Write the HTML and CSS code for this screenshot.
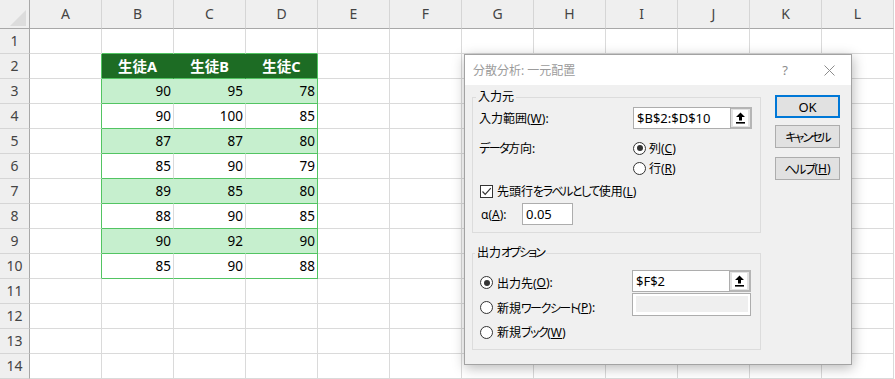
FILE: index.html
```html
<!DOCTYPE html>
<html lang="ja">
<head>
<meta charset="utf-8">
<title>分散分析: 一元配置</title>
<link rel="stylesheet" href="styles.css">
</head>
<body>
<div class="sheet">
  <div class="row hdr">
    <div class="corner"><svg width="16" height="16" viewBox="0 0 16 16"><polygon points="16,0 16,16 0,16" fill="#dcdcdc"/></svg></div>
    <div>A</div><div>B</div><div>C</div><div>D</div><div>E</div><div>F</div><div>G</div><div>H</div><div>I</div><div>J</div><div>K</div><div>L</div>
  </div>
  <div class="row"><div class="rh">1</div><div></div><div class="tb"></div><div class="tb"></div><div class="tb"></div><div></div><div></div><div></div><div></div><div></div><div></div><div></div><div></div></div>
  <div class="row"><div class="rh">2</div><div class="tl"></div><div class="h">生徒A</div><div class="h">生徒B</div><div class="h tr">生徒C</div><div></div><div></div><div></div><div></div><div></div><div></div><div></div><div></div></div>
  <div class="row"><div class="rh">3</div><div class="tl"></div><div class="n gf">90</div><div class="n gf">95</div><div class="n gf tr">78</div><div></div><div></div><div></div><div></div><div></div><div></div><div></div><div></div></div>
  <div class="row"><div class="rh">4</div><div class="tl"></div><div class="n">90</div><div class="n">100</div><div class="n tr">85</div><div></div><div></div><div></div><div></div><div></div><div></div><div></div><div></div></div>
  <div class="row"><div class="rh">5</div><div class="tl"></div><div class="n gf">87</div><div class="n gf">87</div><div class="n gf tr">80</div><div></div><div></div><div></div><div></div><div></div><div></div><div></div><div></div></div>
  <div class="row"><div class="rh">6</div><div class="tl"></div><div class="n">85</div><div class="n">90</div><div class="n tr">79</div><div></div><div></div><div></div><div></div><div></div><div></div><div></div><div></div></div>
  <div class="row"><div class="rh">7</div><div class="tl"></div><div class="n gf">89</div><div class="n gf">85</div><div class="n gf tr">80</div><div></div><div></div><div></div><div></div><div></div><div></div><div></div><div></div></div>
  <div class="row"><div class="rh">8</div><div class="tl"></div><div class="n">88</div><div class="n">90</div><div class="n tr">85</div><div></div><div></div><div></div><div></div><div></div><div></div><div></div><div></div></div>
  <div class="row"><div class="rh">9</div><div class="tl"></div><div class="n gf">90</div><div class="n gf">92</div><div class="n gf tr">90</div><div></div><div></div><div></div><div></div><div></div><div></div><div></div><div></div></div>
  <div class="row"><div class="rh">10</div><div class="tl"></div><div class="n">85</div><div class="n">90</div><div class="n tr">88</div><div></div><div></div><div></div><div></div><div></div><div></div><div></div><div></div></div>
  <div class="row"><div class="rh">11</div><div></div><div></div><div></div><div></div><div></div><div></div><div></div><div></div><div></div><div></div><div></div><div></div></div>
  <div class="row"><div class="rh">12</div><div></div><div></div><div></div><div></div><div></div><div></div><div></div><div></div><div></div><div></div><div></div><div></div></div>
  <div class="row"><div class="rh">13</div><div></div><div></div><div></div><div></div><div></div><div></div><div></div><div></div><div></div><div></div><div></div><div></div></div>
  <div class="row"><div class="rh">14</div><div></div><div></div><div></div><div></div><div></div><div></div><div></div><div></div><div></div><div></div><div></div><div></div></div>
</div>

<div class="dlg">
  <div class="dlg-title">
    <span class="dlg-name">分散分析: 一元配置</span>
    <span class="dlg-help">?</span>
    <svg class="dlg-close" width="11" height="11" viewBox="0 0 11 11"><path d="M0.5 0.5 L10.5 10.5 M10.5 0.5 L0.5 10.5" stroke="#8c8c8c" stroke-width="1" fill="none"/></svg>
  </div>
  <div class="dlg-body">
    <div class="dlg-main">
      <div class="grp g1">
        <div class="legend">入力元</div>
        <div class="line l-range">
          <span class="lbl">入力範囲(<u>W</u>):</span>
          <div class="ref"><span class="ref-text">$B$2:$D$10</span><span class="pick"><span><svg width="11" height="12" viewBox="0 0 11 12"><path d="M5.5 0.5 L10 5 H7 V8.5 H4 V5 H1 Z" fill="#000"/><rect x="1" y="10" width="9" height="1.6" fill="#000"/></svg></span></span></div>
        </div>
        <div class="line l-dir">
          <span class="lbl"><span class="k">データ</span>方向:</span>
          <span class="opt"><span class="rd on"></span>列(<u>C</u>)</span>
        </div>
        <div class="line l-row">
          <span class="lbl"></span>
          <span class="opt"><span class="rd"></span>行(<u>R</u>)</span>
        </div>
        <div class="line l-chk">
          <span class="chk"><svg width="11" height="11" viewBox="0 0 11 11"><path d="M1.5 5.5 L4.2 8.3 L9.8 2.2" stroke="#333" stroke-width="1.2" fill="none"/></svg></span>先頭行<span class="k">をラベルとして</span>使用(<u>L</u>)
        </div>
        <div class="line l-alpha">
          <span class="alpha-lbl">α(<u>A</u>):</span>
          <span class="field alpha">0.05</span>
        </div>
      </div>
      <div class="grp g2">
        <div class="legend">出力<span class="k2">オプション</span></div>
        <div class="out">
          <div class="out-opts">
            <div class="out-row r1"><span class="rd on"></span>出力先(<u>O</u>):</div>
            <div class="out-row r2"><span class="rd"></span>新規<span class="k">ワークシート</span>(<u>P</u>):</div>
            <div class="out-row r3"><span class="rd"></span>新規<span class="k">ブック</span>(<u>W</u>)</div>
          </div>
          <div class="out-fields">
            <div class="ref"><span class="ref-text">$F$2</span><span class="pick"><span><svg width="11" height="12" viewBox="0 0 11 12"><path d="M5.5 0.5 L10 5 H7 V8.5 H4 V5 H1 Z" fill="#000"/><rect x="1" y="10" width="9" height="1.6" fill="#000"/></svg></span></span></div>
            <div class="disabled"><span></span></div>
          </div>
        </div>
      </div>
    </div>
    <div class="dlg-btns">
      <div class="btn def">OK</div>
      <div class="btn b2"><span class="k2">キャンセル</span></div>
      <div class="btn b3"><span class="k">ヘルプ</span>(<u>H</u>)</div>
    </div>
  </div>
</div>
</body>
</html>
```

FILE: styles.css
```css
html, body {
  margin: 0;
  padding: 0;
}
body {
  width: 895px;
  height: 379px;
  overflow: hidden;
  position: relative;
  background: #fff;
  font-family: "Noto Sans", "Noto Sans CJK JP", sans-serif;
  font-feature-settings: "palt";
}

/* ---------- sheet ---------- */
.sheet {
  display: flex;
  flex-direction: column;
}
.row {
  display: grid;
  grid-template-columns: 30px repeat(12, 72px);
  height: 25px;
}
.row > div {
  box-sizing: border-box;
  border-right: 1px solid #dadada;
  border-bottom: 1px solid #dadada;
  font-size: 14px;
  line-height: 24px;
  color: #000;
  white-space: nowrap;
  overflow: hidden;
}
.hdr {
  height: 29px;
}
.row.hdr > div {
  background: #efefef;
  border-right-color: #d5d5d5;
  border-bottom-color: #a8a8a8;
  text-align: center;
  color: #444;
  line-height: 28px;
}
.row.hdr > .corner {
  border-right-color: #a8a8a8;
  display: flex;
  align-items: flex-end;
  justify-content: flex-end;
  padding: 0 3px 2px 0;
}
.row > .rh {
  background: #efefef;
  border-right-color: #a8a8a8;
  border-bottom-color: #d5d5d5;
  text-align: center;
  color: #444;
}

/* table B2:D10 */
.row > .tb { border-bottom-color: #52c462; }
.row > .tl { border-right-color: #52c462; }
.row > .h {
  background: #1d6c24;
  color: #fff;
  font-weight: 700;
  font-size: 14.5px;
  text-align: center;
  border-right-color: #1d6c24;
  border-bottom-color: #52c462;
}
.row > .n {
  text-align: right;
  padding-right: 2px;
  border-bottom-color: #52c462;
  font-size: 13.5px;
}
.row > .gf {
  background: #c6efce;
  border-right-color: #c6efce;
}
.row > .tr { border-right-color: #52c462; }

/* ---------- dialog ---------- */
.dlg {
  position: absolute;
  left: 464px;
  top: 54px;
  width: 388px;
  height: 311px;
  box-sizing: border-box;
  border: 1px solid #a3a3a3;
  background: #f0f0f0;
  box-shadow: 1px 3px 12px rgba(0, 0, 0, 0.28);
  font-size: 12px;
  color: #000;
}
.k {
  letter-spacing: -1.5px;
}
.k2 {
  letter-spacing: -2px;
}
.dlg-title {
  height: 30px;
  background: #fff;
  display: flex;
  align-items: center;
  padding: 0 16px 0 8px;
}
.dlg-name {
  color: #9b9b9b;
  font-size: 12px;
}
.dlg-help {
  margin-left: auto;
  color: #8c8c8c;
  font-size: 13px;
}
.dlg-close {
  margin-left: 36px;
}
.dlg-body {
  display: flex;
  align-items: flex-start;
  padding: 10px 0 0 7px;
}
.dlg-main {
  width: 289px;
  flex: none;
}
.grp {
  box-sizing: border-box;
  border: 1px solid #dcdcdc;
}
.g1 {
  height: 136px;
  margin-top: 2px;
}
.g2 {
  height: 97px;
  margin-top: 20px;
}
.legend {
  width: max-content;
  height: 18px;
  line-height: 18px;
  margin: -10px 0 0 3px;
  padding: 0 2px;
  background: #f0f0f0;
}
.g2 .legend {
  margin-left: 2px;
}
.line {
  display: flex;
  align-items: center;
  padding-left: 6px;
}
.lbl {
  width: 154px;
  flex: none;
}
.l-range {
  height: 22px;
  margin-top: 1px;
}
.l-dir {
  height: 20px;
  margin-top: 9px;
}
.l-row {
  height: 20px;
}
.l-chk {
  height: 20px;
  margin-top: 3px;
  padding-left: 7px;
}
.l-alpha {
  height: 22px;
  margin-top: 2px;
  padding-left: 8px;
}
.opt {
  display: flex;
  align-items: center;
}
.ref {
  display: flex;
  height: 22px;
}
.ref-text {
  box-sizing: border-box;
  width: 98px;
  height: 22px;
  border: 1px solid #adadad;
  background: #fff;
  padding-left: 3px;
  line-height: 20px;
  font-size: 13px;
}
.pick {
  box-sizing: border-box;
  width: 21px;
  height: 22px;
  border: 2px solid #b5b5b5;
  border-left: none;
  background: #e3e3e3;
  padding: 1px 2px 1px 2px;
  display: flex;
}
.pick > span {
  flex: 1;
  background: #fff;
  display: flex;
  align-items: center;
  justify-content: center;
}
.rd {
  box-sizing: border-box;
  width: 13px;
  height: 13px;
  border: 1px solid #333;
  border-radius: 50%;
  background: #fff;
  margin-right: 3px;
  flex: none;
  display: flex;
  align-items: center;
  justify-content: center;
}
.rd.on::after {
  content: "";
  width: 6px;
  height: 6px;
  border-radius: 50%;
  background: #333;
}
.chk {
  box-sizing: border-box;
  width: 13px;
  height: 13px;
  border: 1px solid #333;
  background: #fff;
  margin-right: 4px;
  flex: none;
  display: flex;
  align-items: center;
  justify-content: center;
}
.alpha-lbl {
  width: 41px;
  flex: none;
}
.field {
  box-sizing: border-box;
  height: 22px;
  border: 1px solid #adadad;
  background: #fff;
  padding-left: 3px;
  line-height: 20px;
  font-size: 13px;
}
.alpha {
  width: 51px;
}
.out {
  display: flex;
  margin-top: 8px;
}
.out-opts {
  width: 159px;
  flex: none;
  padding-left: 7px;
  box-sizing: border-box;
}
.out-row {
  display: flex;
  align-items: center;
  height: 25px;
}
.out-row .rd {
  margin-right: 4px;
}
.out-row.r3 {
  height: 24px;
}
.out-fields {
  display: flex;
  flex-direction: column;
  gap: 1px;
}
.disabled {
  box-sizing: border-box;
  width: 119px;
  height: 23px;
  border: 1px solid #adadad;
  background: #fff;
  padding: 2px 2px 3px 3px;
  display: flex;
}
.disabled > span {
  flex: 1;
  background: #efefef;
}
.dlg-btns {
  display: flex;
  flex-direction: column;
  margin-left: 14px;
}
.btn {
  box-sizing: border-box;
  width: 65px;
  height: 23px;
  border: 1px solid #adadad;
  background: #e1e1e1;
  display: flex;
  align-items: center;
  justify-content: center;
  font-size: 12px;
}
.btn.def {
  border: 2px solid #0078d7;
  font-size: 13px;
}
.b2 {
  margin-top: 7px;
}
.b3 {
  margin-top: 9px;
}
```
